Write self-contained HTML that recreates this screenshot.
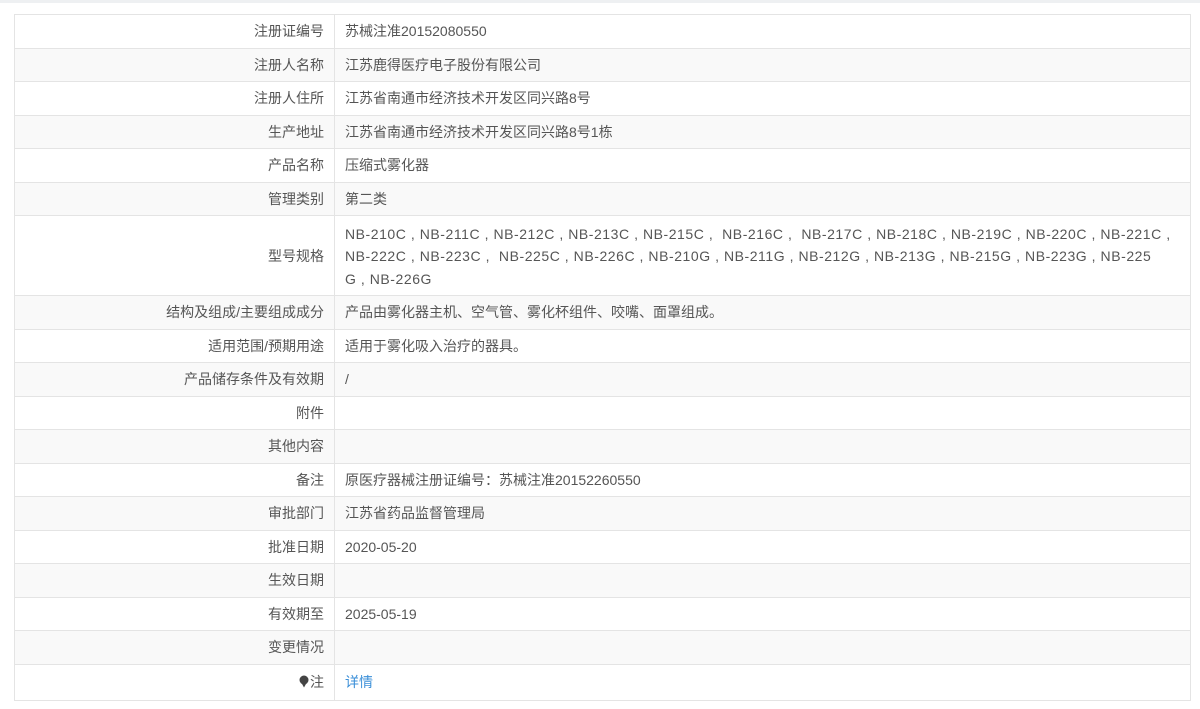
<!DOCTYPE html>
<html><head><meta charset="utf-8"><style>
body{margin:0;background:#fff;width:1200px;height:709px;overflow:hidden;font-family:"Liberation Sans","Noto Sans CJK SC",sans-serif;font-size:14px;color:#555}
.top{position:absolute;left:0;top:0;width:1200px;height:3px;background:#eef0f2}
table{position:absolute;left:14px;top:14px;width:1177px;border-collapse:collapse;table-layout:fixed}
td{border:1px solid #e4e4e4;height:33.5px;padding:0 10px;box-sizing:border-box;white-space:nowrap}
td.l{width:320px;text-align:right}
tr:nth-child(even) td{background:#f9f9f9}
td.t{line-height:22.5px;padding:2px 10px 0;height:80px;letter-spacing:0.55px;overflow:hidden}
a{color:#3b8fd8;text-decoration:none}
</style></head><body><div class="top"></div>
<table>
<tr><td class="l">注册证编号</td><td>苏械注准20152080550</td></tr>
<tr><td class="l">注册人名称</td><td>江苏鹿得医疗电子股份有限公司</td></tr>
<tr><td class="l">注册人住所</td><td>江苏省南通市经济技术开发区同兴路8号</td></tr>
<tr><td class="l">生产地址</td><td>江苏省南通市经济技术开发区同兴路8号1栋</td></tr>
<tr><td class="l">产品名称</td><td>压缩式雾化器</td></tr>
<tr><td class="l">管理类别</td><td>第二类</td></tr>
<tr><td class="l">型号规格</td><td class="t">NB-210C , NB-211C , NB-212C , NB-213C , NB-215C ,&nbsp; NB-216C ,&nbsp; NB-217C , NB-218C , NB-219C , NB-220C , NB-221C ,<br>NB-222C , NB-223C ,&nbsp; NB-225C , NB-226C , NB-210G , NB-211G , NB-212G , NB-213G , NB-215G , NB-223G , NB-225<br>G , NB-226G</td></tr>
<tr><td class="l">结构及组成/主要组成成分</td><td>产品由雾化器主机、空气管、雾化杯组件、咬嘴、面罩组成。</td></tr>
<tr><td class="l">适用范围/预期用途</td><td>适用于雾化吸入治疗的器具。</td></tr>
<tr><td class="l">产品储存条件及有效期</td><td>/</td></tr>
<tr><td class="l">附件</td><td></td></tr>
<tr><td class="l">其他内容</td><td></td></tr>
<tr><td class="l">备注</td><td>原医疗器械注册证编号：苏械注准20152260550</td></tr>
<tr><td class="l">审批部门</td><td>江苏省药品监督管理局</td></tr>
<tr><td class="l">批准日期</td><td>2020-05-20</td></tr>
<tr><td class="l">生效日期</td><td></td></tr>
<tr><td class="l">有效期至</td><td>2025-05-19</td></tr>
<tr><td class="l">变更情况</td><td></td></tr>
<tr><td class="l" style="height:36px"><svg width="10" height="13" viewBox="0 0 10 13" style="vertical-align:-1px;margin-right:1px"><circle cx="5" cy="5" r="4.5" fill="#444"/><path d="M2.5 8 L5 12.5 L7.5 8Z" fill="#444"/></svg>注</td><td><a>详情</a></td></tr>
</table>
</body></html>
